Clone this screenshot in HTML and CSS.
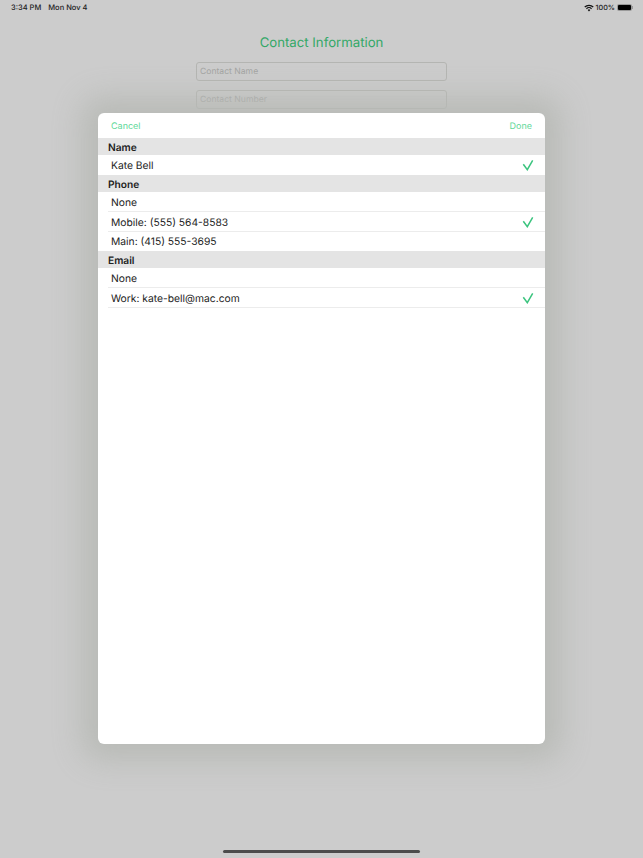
FILE: index.html
```html
<!DOCTYPE html>
<html lang="en">
<head>
<meta charset="utf-8">
<title>Contact Information</title>
<link rel="stylesheet" href="styles.css">
</head>
<body>
<div class="page">
  <header class="status">
    <div class="status-left"><span>3:34 PM</span><span>Mon Nov 4</span></div>
    <div class="status-right">
      <svg class="wifi" width="10" height="8" viewBox="0 0 10 8"><path d="M0.3 2.6A6.6 6.6 0 0 1 9.7 2.6L8.8 3.5A5.3 5.3 0 0 0 1.2 3.5ZM2 4.3A4.2 4.2 0 0 1 8 4.3L7.1 5.2A2.9 2.9 0 0 0 2.9 5.2ZM3.7 6A1.8 1.8 0 0 1 6.3 6L5 7.4Z" fill="#111"/></svg>
      <span>100%</span>
      <span class="battery"><span class="battery-fill"></span></span>
      <span class="battery-cap"></span>
    </div>
  </header>
  <h1 class="title">Contact Information</h1>
  <div class="form">
    <div class="field">Contact Name</div>
    <div class="field">Contact Number</div>
  </div>
  <div class="home-bar"></div>

  <section class="modal">
    <div class="modal-bar">
      <span class="action">Cancel</span>
      <span class="action">Done</span>
    </div>
    <div class="section-head">Name</div>
    <div class="row"><span class="label">Kate Bell</span>
      <svg class="check" width="12" height="12" viewBox="0 0 12 12"><path d="M1.3 5.3L5.3 10.7L10.7 1.3" fill="none" stroke="#3cc47f" stroke-width="1.5"/></svg>
    </div>
    <div class="section-head">Phone</div>
    <div class="row ruled"><span class="label">None</span></div>
    <div class="row ruled"><span class="label">Mobile: (555) 564-8583</span>
      <svg class="check" width="12" height="12" viewBox="0 0 12 12"><path d="M1.3 5.3L5.3 10.7L10.7 1.3" fill="none" stroke="#3cc47f" stroke-width="1.5"/></svg>
    </div>
    <div class="row row-last"><span>Main: (415) 555-3695</span></div>
    <div class="section-head">Email</div>
    <div class="row ruled"><span class="label">None</span></div>
    <div class="row ruled"><span class="label">Work: kate-bell@mac.com</span>
      <svg class="check" width="12" height="12" viewBox="0 0 12 12"><path d="M1.3 5.3L5.3 10.7L10.7 1.3" fill="none" stroke="#3cc47f" stroke-width="1.5"/></svg>
    </div>
  </section>
</div>
</body>
</html>
```
FILE: styles.css
```css
* { box-sizing: border-box; }
html, body { margin: 0; padding: 0; height: 100%; }
body {
  background: #cccccc;
  font-family: Inter, "Liberation Sans", sans-serif;
  text-rendering: geometricPrecision;
  overflow: hidden;
}
.page {
  position: relative;
  width: 643px;
  height: 858px;
  display: flex;
  flex-direction: column;
  align-items: center;
}
.status {
  width: 100%;
  height: 15px;
  padding: 0 10px 0 11px;
  display: flex;
  justify-content: space-between;
  align-items: center;
  font-size: 7.5px;
  font-weight: 500;
  color: #222;
}
.status-left { display: flex; gap: 7px; }
.status-right { display: flex; align-items: center; gap: 2px; font-size: 7.2px; }
.battery {
  width: 15px;
  height: 7px;
  padding: 1px;
  border-radius: 2px;
  background: #9a9a9a;
  display: block;
}
.battery-fill { display: block; width: 100%; height: 100%; background: #000; border-radius: 1px; }
.battery-cap { width: 1px; height: 3px; margin-left: -2px; background: #999; }
.title {
  margin: 19px 0 0;
  height: 19px;
  font-size: 13.2px;
  line-height: 19px;
  font-weight: 400;
  color: #34a868;
}
.form {
  margin-top: 9px;
  width: 251px;
  display: flex;
  flex-direction: column;
  gap: 9px;
}
.field {
  height: 19px;
  padding-left: 3px;
  border: 1px solid #b4b5b2;
  border-radius: 3px;
  font-size: 8.6px;
  line-height: 19px;
  color: #a3a4a2;
}
.home-bar {
  margin-top: auto;
  margin-bottom: 5px;
  width: 197px;
  height: 3px;
  border-radius: 2px;
  background: #4c4c4c;
}
.modal {
  position: absolute;
  left: 98px;
  top: 113px;
  width: 447px;
  height: 631px;
  background: #fff;
  border-radius: 6px;
  overflow: hidden;
  box-shadow: 0 0 30px 16px rgba(183, 185, 181, 0.95);
}
.modal-bar {
  height: 25px;
  padding: 1px 13px 0;
  display: flex;
  justify-content: space-between;
  align-items: center;
}
.action { font-size: 9px; color: #5fd89a; }
.section-head {
  height: 17px;
  padding-left: 10px;
  background: #e4e4e4;
  font-size: 10.2px;
  font-weight: 600;
  line-height: 20px;
  color: #222;
}
.row {
  height: 20px;
  margin-left: 10px;
  padding: 0 11px 0 3px;
  display: flex;
  justify-content: space-between;
  align-items: center;
  font-size: 10.3px;
  color: #222;
}
.label { padding-top: 2px; }
.ruled { border-bottom: 1px solid #ececec; }
.row-last { height: 19px; }
.check { flex: none; }
```
